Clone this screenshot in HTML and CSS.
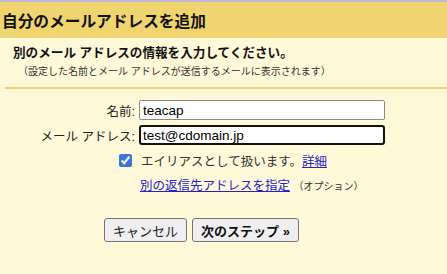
FILE: index.html
```html
<!DOCTYPE html>
<html lang="ja">
<head>
    <meta charset="UTF-8">
    <title>自分のメールアドレスを追加</title>
    <link rel="stylesheet" href="styles.css">
</head>
<body>
    <!-- Cabecera -->
    <div class="cabecera">
        <h1>自分のメールアドレスを追加</h1>
    </div>

    <div class="contenido">
        <p class="subtitulo">別のメール アドレスの情報を入力してください。</p>
        <p class="nota">（設定した名前とメール アドレスが送信するメールに表示されます）</p>
        <div class="separador"></div>

        <!-- Formulario -->
        <div class="formulario">
            <label class="etiqueta" for="nombre">名前:</label>
            <input class="campo" id="nombre" type="text" value="teacap">

            <label class="etiqueta" for="correo">メール アドレス:</label>
            <input class="campo activo" id="correo" type="text" value="test@cdomain.jp">

            <div class="opcion">
                <input type="checkbox" class="casilla" checked>
                <span>エイリアスとして扱います。<a href="#">詳細</a></span>
            </div>

            <div class="opcion-link">
                <a href="#">別の返信先アドレスを指定</a> <span class="pequeno">（オプション）</span>
            </div>
        </div>

        <!-- Botones -->
        <div class="botones">
            <button class="boton">キャンセル</button>
            <button class="boton fuerte">次のステップ &raquo;</button>
        </div>
    </div>
</body>
</html>
```

FILE: styles.css
```css
/* Estilo general */
body {
    margin: 0;
    font-family: "Liberation Sans", "Noto Sans CJK JP", sans-serif;
    background-color: #fff8d9;
    color: #222;
    border-top: 2px solid #bdb6d6;
    height: 272px;
    overflow: hidden;
}

/* Cabecera amarilla */
.cabecera {
    background-color: #f0d470;
    height: 36px;
    padding-left: 2px;
    display: flex;
    align-items: center;
}

.cabecera h1 {
    margin: 0;
    font-size: 15.7px;
    font-weight: bold;
    color: #111;
}

.contenido {
    padding-left: 5px;
}

.subtitulo {
    margin: 7px 0 0 8px;
    font-size: 12.6px;
    font-weight: bold;
    color: #111;
    line-height: 16px;
}

.nota {
    margin: 4px 0 0 13px;
    font-size: 10px;
    line-height: 14px;
    color: #333;
}

.separador {
    height: 2px;
    background-color: #f0d470;
    margin-top: 8px;
}

/* Formulario */
.formulario {
    display: grid;
    grid-template-columns: 130px 246px;
    column-gap: 4px;
    row-gap: 5px;
    margin-top: 11px;
    align-items: center;
}

.etiqueta {
    text-align: right;
    font-size: 12.5px;
    color: #222;
}

.campo {
    box-sizing: border-box;
    width: 246px;
    height: 20px;
    margin: 0;
    padding: 0 3px;
    border: 1px solid #8a8a8a;
    border-radius: 2px;
    background-color: #fff;
    font-family: "Liberation Sans", sans-serif;
    font-size: 13.5px;
    color: #000;
}

.campo.activo {
    border: 2px solid #111;
    border-radius: 3px;
    padding: 0 2px;
}

.opcion {
    grid-column: 1 / 3;
    display: flex;
    align-items: center;
    padding-left: 114px;
    margin-top: 1px;
    font-size: 12.5px;
    color: #333;
}

.casilla {
    width: 13px;
    height: 13px;
    margin: 0 9px 0 0;
    accent-color: #3d74d9;
}

.opcion-link {
    grid-column: 1 / 3;
    padding-left: 135px;
    margin-top: 0;
    font-size: 12.5px;
}

a {
    color: #2323c8;
}

.pequeno {
    font-size: 10px;
    color: #333;
}

/* Botones */
.botones {
    display: flex;
    gap: 5px;
    padding-left: 99px;
    margin-top: 24px;
}

.boton {
    height: 24px;
    padding: 0 8px;
    font-family: "Liberation Sans", "Noto Sans CJK JP", sans-serif;
    font-size: 13px;
    color: #222;
    background-color: #efeff1;
    border: 1px solid #767676;
    border-radius: 3px;
}

.boton.fuerte {
    font-weight: bold;
    color: #111;
}
```
